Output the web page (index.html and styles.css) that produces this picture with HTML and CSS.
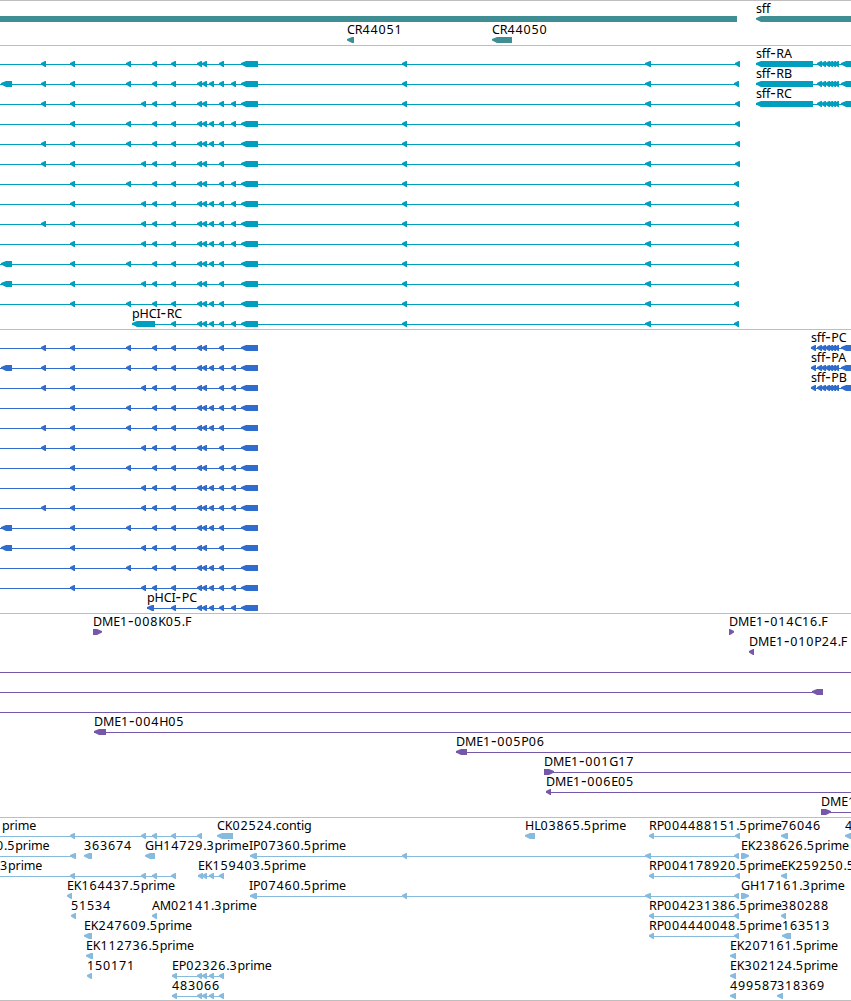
FILE: index.html
```html
<!DOCTYPE html>
<html lang="en">
<head>
    <meta charset="UTF-8">
    <meta name="viewport" content="width=device-width, initial-scale=1.0">
    <title>Genome map</title>
    <link rel="stylesheet" href="styles.css">
</head>
<body>
    <main class="map">
        <section class="track genes" id="genes"></section>
        <section class="track transcripts" id="transcripts"></section>
        <section class="track proteins" id="proteins"></section>
        <section class="track bacs" id="bacs"></section>
        <section class="track ests" id="ests"></section>
    </main>
    <script src="tracks.js"></script>
</body>
</html>
```
FILE: styles.css
```css
body {
    margin: 0;
    background: #fff;
    overflow: hidden;
}
.map {
    display: flex;
    flex-direction: column;
    height: 1000px;
    border-bottom: 1px solid #bebebe;
}
.track {
    border-top: 1px solid #bebebe;
}
.track svg {
    display: block;
    width: 100%;
    height: 100%;
}
.genes {
    height: 44px;
    fill: #3f8e94;
}
.transcripts {
    height: 283px;
    fill: #009ebf;
}
.proteins {
    height: 283px;
    fill: #306ccd;
}
.bacs {
    height: 203px;
    fill: #7558a8;
}
.ests {
    height: 182px;
    fill: #87bbde;
}
.label {
    font-family: "Noto Sans", "Open Sans", sans-serif;
    font-size: 12.5px;
    fill: #000;
}
.name {
    letter-spacing: -0.12px;
}
.num {
    letter-spacing: 0.85px;
}
.dash {
    font-size: 17px;
    letter-spacing: 0.6px;
}
```
FILE: tracks.js
```js
const NS = 'http://www.w3.org/2000/svg';

// shared exons, [start, end]
const EXONS = {
    A: [1, 12], B: [41, 46], C: [70, 75], D: [126, 131], E: [141, 146],
    F: [152, 157], G: [171, 176], H: [197, 202], I: [202, 207], J: [209, 214],
    K: [219, 224], L: [231, 236], M: [241, 258], N: [402, 407], O: [645, 651]
};
const exons = keys => [...keys].map(k => EXONS[k]);

// row, label, label x, blocks, line [start, end], direction
function feature(row, name, x, blocks, line, dir) {
    return { row, name, x, blocks, line, dir: dir || 'left' };
}

const genes = [
    feature(0, '', 0, [[-20, 737]]),
    feature(0, 'sff', 756, [[756, 870]]),
    feature(1, 'CR44051', 347, [[347, 354]]),
    feature(1, 'CR44050', 492, [[492, 512]])
];

const transcripts = [
    ['BCDFGHIKM', 740], ['ABCDFGHIJKLM', 739], ['BCEFGHIKLM', 740],
    ['CDFGHIJKLM', 740], ['BCDFGHIJKM', 740], ['BCEFGHIKM', 740],
    ['CDFGHIKLM', 739], ['CEFGHIJKLM', 739], ['BCEFGHIJKLM', 739],
    ['CEFGHIJKLM', 739], ['ACDFGHIJKM', 739], ['ACEFGHIKM', 739],
    ['CDFGHIJKM', 739]
].map(([keys, end], row) =>
    feature(row, '', 0, [...exons(keys + 'NO'), [end - 5, end]], [0, end]));
transcripts.push(feature(13, 'pHCI-RC', 132, [[132, 155], ...exons('GHIJKLMNO'), [734, 739]], [132, 739]));

const sffExons = [[817, 822], [821, 826], [825, 830], [828, 833], [831, 836], [834, 839], [841, 851]];
['sff-RA', 'sff-RB', 'sff-RC'].forEach((name, row) => {
    transcripts.push(feature(row, name, 756, [[756, 813], ...sffExons], [756, 851]));
});

const proteins = [
    'BCDFGHIKM', 'ABCDFGHIJKLM', 'BCEFGHIKLM', 'CDFGHIJKLM', 'BCDFGHIJKM',
    'BCEFGHIKM', 'CDFGHIKLM', 'CEFGHIJKLM', 'BCEFGHIJKLM', 'ACDFGHIJKM',
    'ACEFGHIKM', 'CDFGHIJKM', 'CEFGHIJKLM'
].map((keys, row) => feature(row, '', 0, exons(keys), [0, 258]));
proteins.push(feature(13, 'pHCI-PC', 147, [[147, 154], ...exons('GHIJKLM')], [147, 258]));
['sff-PC', 'sff-PA', 'sff-PB'].forEach((name, row) => {
    proteins.push(feature(row, name, 811, [[811, 816], ...sffExons], [811, 851]));
});

const bacs = [
    feature(0, 'DME1-008K05.F', 93, [[93, 102]], null, 'right'),
    feature(0, 'DME1-014C16.F', 729, [[729, 734]], null, 'right'),
    feature(1, 'DME1-010P24.F', 749, [[749, 754]]),
    feature(2, '', 0, [], [0, 851]),
    feature(3, '', 0, [[812, 823]], [0, 823]),
    feature(4, '', 0, [], [0, 851]),
    feature(5, 'DME1-004H05', 94, [[94, 106]], [94, 851]),
    feature(6, 'DME1-005P06', 456, [[456, 467]], [456, 851]),
    feature(7, 'DME1-001G17', 544, [[544, 554]], [544, 851], 'right'),
    feature(8, 'DME1-006E05', 546, [[546, 551]], [546, 851]),
    feature(9, 'DME1', 821, [[821, 831]], [821, 851], 'right')
];

const ests = [
    feature(0, 'prime', 2, exons('CEFGH'), [0, 202]),
    feature(0, 'CK02524.contig', 217, [[217, 233]]),
    feature(0, 'HL03865.5prime', 525, [[525, 535]]),
    feature(0, 'RP004488151.5prime', 649, [[649, 654], [735, 740]], [649, 740]),
    feature(0, '76046', 781, [[781, 788]]),
    feature(0, '4', 845, [[845, 855]]),
    feature(1, '0.5prime', -4, [[70, 76]], [0, 76]),
    feature(1, '363674', 84, [[84, 92]]),
    feature(1, 'GH14729.3prime', 145, [[145, 155]]),
    feature(1, 'IP07360.5prime', 249, [[250, 257], ...exons('NO'), [734, 739]], [250, 739]),
    feature(1, 'EK238626.5prime', 741, [[741, 749]], null, 'right'),
    feature(2, '3prime', 0, exons('CEFG'), [0, 176]),
    feature(2, 'EK159403.5prime', 198, [[198, 203], ...exons('IJK')], [198, 224]),
    feature(2, 'RP004178920.5prime', 649, [[649, 654], [735, 740]], [649, 740]),
    feature(2, 'EK259250.5prime', 781, [[781, 787]]),
    feature(3, 'EK164437.5prime', 67, [[67, 72]]),
    feature(3, 'IP07460.5prime', 249, [[250, 257], ...exons('NO'), [734, 739]], [250, 739]),
    feature(3, 'GH17161.3prime', 741, [[741, 749]], null, 'right'),
    feature(4, '51534', 71, [[71, 76]]),
    feature(4, 'AM02141.3prime', 152, [[152, 157]]),
    feature(4, 'RP004231386.5prime', 649, [[649, 654], [734, 739]], [649, 739]),
    feature(4, '380288', 781, [[781, 786]]),
    feature(5, 'EK247609.5prime', 84, [[84, 92]]),
    feature(5, 'RP004440048.5prime', 649, [[649, 654], [734, 739]], [649, 739]),
    feature(5, '163513', 782, [[782, 791]]),
    feature(6, 'EK112736.5prime', 86, [[86, 93]]),
    feature(6, 'EK207161.5prime', 730, [[730, 736]]),
    feature(7, '150171', 87, [[87, 92]]),
    feature(7, 'EP02326.3prime', 172, [[172, 177], ...exons('HIJK')], [172, 224]),
    feature(7, 'EK302124.5prime', 730, [[730, 736]]),
    feature(8, '483066', 172, [[172, 177], ...exons('HIJK')], [172, 224]),
    feature(8, '499587', 730, [[730, 736]]),
    feature(8, '318369', 777, [[777, 783]])
];

function add(parent, tag, attrs) {
    const el = document.createElementNS(NS, tag);
    for (const key in attrs) el.setAttribute(key, attrs[key]);
    parent.appendChild(el);
    return el;
}

// block with a pointed end, 6px high; the tip is slightly blunt
function arrow([x1, x2], y, dir) {
    if (dir === 'right') {
        const n = Math.max(x1 + 1, x2 - 5);
        return `${x1},${y} ${n},${y} ${x2},${y + 2} ${x2},${y + 3.5} ${n},${y + 6} ${x1},${y + 6}`;
    }
    const n = Math.min(x2 - 1, x1 + 5);
    return `${x1},${y + 2} ${n},${y} ${x2},${y} ${x2},${y + 6} ${n},${y + 6} ${x1},${y + 3.5}`;
}

function drawTrack(id, features, rowHeight) {
    const svg = add(document.getElementById(id), 'svg', {});
    features.forEach(f => {
        const top = f.row * rowHeight;
        if (f.line) {
            add(svg, 'rect', { x: f.line[0], y: top + 18, width: f.line[1] - f.line[0], height: 1 });
        }
        f.blocks.forEach(b => add(svg, 'polygon', { points: arrow(b, top + 15, f.dir) }));
        if (f.name) {
            const text = add(svg, 'text', { class: 'label', x: f.x, y: top + 12 });
            // digits are set a little wider than letters
            f.name.match(/\d+|-|[^\d-]+/g).forEach(part => {
                const cls = /\d/.test(part) ? 'num' : part === '-' ? 'dash' : 'name';
                add(text, 'tspan', { class: cls }).textContent = part;
            });
        }
    });
}

drawTrack('genes', genes, 21);
drawTrack('transcripts', transcripts, 20);
drawTrack('proteins', proteins, 20);
drawTrack('bacs', bacs, 20);
drawTrack('ests', ests, 20);
```
